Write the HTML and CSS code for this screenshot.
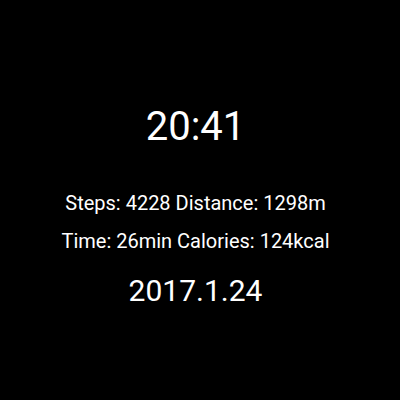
FILE: index.html
```html
<!DOCTYPE html>
<html>
<head>
<meta charset="utf-8">
<link rel="stylesheet" href="styles.css">
</head>
<body>
<div class="face">
  <div class="clock">20:41</div>
  <div class="stat">Steps: 4228 Distance: 1298m</div>
  <div class="stat">Time: 26min Calories: 124kcal</div>
  <div class="date">2017.1.24</div>
</div>
</body>
</html>
```
FILE: styles.css
```css
html, body {
  margin: 0;
  padding: 0;
  background: #000;
  width: 400px;
  height: 400px;
  overflow: hidden;
}
.face {
  display: flex;
  flex-direction: column;
  align-items: center;
  width: 391px;
  color: #fff;
  font-family: Roboto, "Noto Sans", sans-serif;
  padding-top: 101px;
}
.clock {
  font-size: 40px;
  line-height: 52px;
  margin-bottom: 31px;
}
.stat {
  font-size: 20px;
  line-height: 38px;
}
.date {
  font-size: 30px;
  line-height: 40px;
  margin-top: 11px;
}
```
